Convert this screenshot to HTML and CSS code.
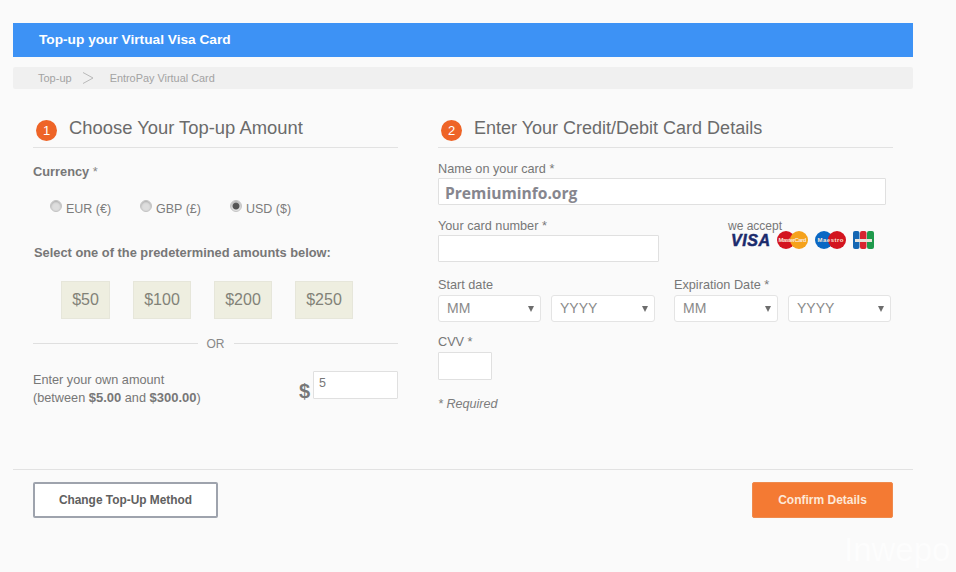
FILE: index.html
```html
<!DOCTYPE html>
<html lang="en">
<head>
<meta charset="utf-8">
<title>Top-up your Virtual Visa Card</title>
<link rel="stylesheet" href="styles.css">
</head>
<body>
<main class="page">
  <header class="banner">Top-up your Virtual Visa Card</header>
  <nav class="crumbs">
    <span>Top-up</span>
    <svg class="crumb-sep" width="12" height="14" viewBox="0 0 12 14"><path d="M1 1.500l10 5.500-10 5.500" fill="none" stroke="#b9b9b9" stroke-width="1"/></svg>
    <span class="crumb-current">EntroPay Virtual Card</span>
  </nav>
  <div class="columns">
    <section class="col-left">
      <h2 class="step-title step-title-1"><span class="step-num">1</span>Choose Your Top-up Amount</h2>
      <div class="currency-label">Currency <span class="star">*</span></div>
      <div class="radios">
        <label class="radio-item"><span class="radio"></span>EUR (€)</label>
        <label class="radio-item"><span class="radio"></span>GBP (£)</label>
        <label class="radio-item"><span class="radio radio-on"></span>USD ($)</label>
      </div>
      <div class="select-label">Select one of the predetermined amounts below:</div>
      <div class="amounts">
        <button class="amount amount-sm">$50</button>
        <button class="amount">$100</button>
        <button class="amount">$200</button>
        <button class="amount">$250</button>
      </div>
      <div class="or"><span class="or-text">OR</span></div>
      <div class="own">
        <p class="own-text">Enter your own amount<br>(between <b>$5.00</b> and <b>$300.00</b>)</p>
        <span class="dollar">$</span>
        <input class="input input-own" value="5">
      </div>
    </section>
    <section class="col-right">
      <h2 class="step-title step-title-2"><span class="step-num">2</span>Enter Your Credit/Debit Card Details</h2>
      <label class="field-label label-name">Name on your card *</label>
      <input class="input input-name" value="Premiuminfo.org">
      <div class="card-row">
        <div>
          <label class="field-label">Your card number *</label>
          <input class="input input-card">
        </div>
        <div class="accept">
          <div class="accept-text">we accept</div>
          <div class="logos">
            <svg width="41" height="16" viewBox="0 0 41 16"><text x="2" y="14" class="visa-text" textLength="39">VISA</text></svg>
            <svg width="31" height="18" viewBox="0 0 31 18"><circle cx="9" cy="9" r="9" fill="#d3141f"/><circle cx="22" cy="9" r="9" fill="#f5a21b"/><text x="15.500" y="11" class="mini-text" textLength="28">MasterCard</text></svg>
            <svg width="31" height="18" viewBox="0 0 31 18"><circle cx="9" cy="9" r="9" fill="#0a68c4"/><circle cx="22" cy="9" r="9" fill="#d3141f"/><text x="15.500" y="11" class="mini-text" textLength="26">Maestro</text></svg>
            <svg class="jcb" width="21" height="18" viewBox="0 0 21 18"><rect width="6.500" height="18" rx="2" fill="#1567b3"/><rect x="7" width="6.500" height="18" rx="2" fill="#d8242f"/><rect x="14" width="7" height="18" rx="2" fill="#1f9a4c"/><rect x="2" y="8" width="17" height="3" fill="#e9e4dc"/></svg>
          </div>
        </div>
      </div>
      <div class="dates">
        <div class="date-group">
          <label class="field-label">Start date</label>
          <div class="select-pair">
            <div class="select sel-1">MM</div>
            <div class="select sel-2">YYYY</div>
          </div>
        </div>
        <div class="date-group">
          <label class="field-label">Expiration Date *</label>
          <div class="select-pair">
            <div class="select sel-1b">MM</div>
            <div class="select sel-2b">YYYY</div>
          </div>
        </div>
      </div>
      <label class="field-label label-cvv">CVV *</label>
      <input class="input input-cvv">
      <p class="required">* Required</p>
    </section>
  </div>
  <footer class="actions">
    <button class="btn btn-ghost">Change Top-Up Method</button>
    <button class="btn btn-primary">Confirm Details</button>
  </footer>
</main>
<div class="watermark">Inwepo</div>
</body>
</html>
```
FILE: styles.css
```css
* { box-sizing: border-box; }
html, body { margin: 0; height: 100%; }
body {
  background: #fafafa;
  color: #6f6f6f;
  font-family: "Liberation Sans", Arial, sans-serif;
  font-size: 12px;
  position: relative;
  overflow: hidden;
}
.page { width: 913px; padding: 23px 0 0 13px; }
.banner {
  height: 34px;
  background: #3d92f5;
  color: #fff;
  font-weight: 700;
  font-size: 13.700px;
  line-height: 33px;
  padding-left: 26px;
}
.crumbs {
  margin-top: 10px;
  height: 22px;
  background: #f0f0f0;
  border-radius: 2px;
  display: flex;
  align-items: center;
  padding-left: 25px;
  font-size: 11px;
  color: #a3a3a3;
}
.crumb-sep { margin: 0 16px 0 10px; }
.crumb-current { font-size: 10.900px; }
.columns { display: flex; padding: 0 20px; gap: 40px; height: 380px; }
.col-left { width: 365px; }
.col-right { width: 455px; }
.step-title {
  margin: 0;
  height: 59px;
  padding-top: 28px;
  border-bottom: 1px solid #e2e2e2;
  font-weight: 400;
  font-size: 18px;
  line-height: 22px;
  color: #6b6b6b;
  display: flex;
  align-items: flex-start;
  white-space: nowrap;
}
.step-title-1 { font-size: 18.400px; }
.step-num {
  width: 21px;
  height: 21px;
  margin: 3px 12px 0 3px;
  border-radius: 50%;
  background: #ee6427;
  color: #fff;
  font-size: 13px;
  line-height: 21px;
  text-align: center;
  flex: none;
}
.currency-label {
  margin-top: 16px;
  font-weight: 700;
  font-size: 12.800px;
  line-height: 15px;
  color: #777;
}
.star { color: #888; font-weight: 400; }
.radios { display: flex; margin: 22px 0 0 17px; }
.radio-item {
  display: flex;
  align-items: flex-start;
  font-size: 12.500px;
  line-height: 16px;
  color: #7c7c7c;
  white-space: nowrap;
  width: 90px;
}
.radio {
  width: 12px;
  height: 12px;
  margin: -1px 4px 0 0;
  border-radius: 50%;
  background: #dedede;
  border: 1px solid #c3c3c3;
  box-shadow: inset 0 1px 2px #aaa;
  flex: none;
}
.radio-on {
  background: radial-gradient(circle, #555 0 3px, #e8e8e8 4px);
}
.select-label {
  margin: 28px 0 0 1px;
  font-weight: 700;
  font-size: 12.850px;
  line-height: 16px;
  color: #777;
}
.amounts { display: flex; margin: 20px 0 0 28px; gap: 23px; }
.amount {
  width: 58px;
  height: 38px;
  padding: 0;
  background: #eeeee0;
  border: 1px solid #e6e6da;
  font-family: inherit;
  font-size: 16px;
  color: #828278;
}
.amount-sm { width: 49px; }
.or {
  margin-top: 15px;
  display: flex;
  align-items: center;
  gap: 9px;
  font-size: 12px;
  color: #888;
}
.or-text { line-height: 16px; padding-top: 2px; }
.or::before, .or::after {
  content: "";
  height: 1px;
  background: #dfdfdf;
  flex: 1;
}
.own { display: flex; align-items: flex-start; margin-top: 19px; }
.own-text {
  margin: 0;
  flex: 1;
  font-size: 12.700px;
  line-height: 18px;
  color: #777;
}
.own-text b { font-size: 13px; }
.dollar {
  font-size: 20px;
  font-weight: 700;
  line-height: 24px;
  margin: 8px 3px 0 0;
  color: #777;
}
.input {
  display: block;
  background: #fff;
  border: 1px solid #e0e0e0;
  border-radius: 1px;
  outline: none;
  padding: 0 8px;
  font-family: inherit;
  color: #777;
}
.input-own { width: 85px; height: 28px; font-size: 12.500px; padding: 0 0 5px 5px; }
.field-label {
  display: block;
  font-size: 12.700px;
  line-height: 15px;
  padding-top: 1px;
  margin-bottom: -1px;
  color: #777;
  white-space: nowrap;
}
.label-name { margin-top: 13px; }
.input-name {
  margin-top: 2px;
  width: 448px;
  height: 27px;
  font-family: "Open Sans", sans-serif;
  font-weight: 700;
  font-size: 15.600px;
  color: #86868e;
  padding: 2px 0 0 6px;
}
.card-row { display: flex; margin-top: 13px; }
.input-card { margin-top: 2px; width: 221px; height: 27px; }
.accept { margin: 2px 0 0 69px; }
.accept-text { font-size: 12px; line-height: 12px; color: #777; }
.logos { display: flex; align-items: center; margin: -1px 0 0 1px; }
.logos svg { display: block; }
.logos svg:nth-child(2) { margin-left: 7px; }
.logos svg:nth-child(3) { margin-left: 7px; }
.logos .jcb { margin-left: 7px; }
.visa-text {
  font-family: "Liberation Sans", sans-serif;
  font-weight: 700;
  font-style: italic;
  font-size: 16px;
  fill: #1a2a6c;
  stroke: #1a2a6c;
  stroke-width: 0.500px;
}
.mini-text {
  font-family: "Liberation Sans", sans-serif;
  font-weight: 700;
  font-size: 6px;
  fill: #fbe6d8;
  text-anchor: middle;
}
.dates { display: flex; margin-top: 15px; gap: 19px; }
.date-group .field-label { margin-bottom: 2px; }
.select-pair { display: flex; gap: 10px; }
.select {
  position: relative;
  height: 27px;
  background: #fff;
  border: 1px solid #e4e4e4;
  border-radius: 3px;
  font-size: 14px;
  line-height: 25px;
  color: #8a8a8a;
  padding-left: 8px;
}
.select::after {
  content: "";
  position: absolute;
  right: 6px;
  top: 10px;
  border: 3.500px solid transparent;
  border-top: 6px solid #6d6d6d;
  border-bottom: 0;
}
.sel-1 { width: 103px; }
.sel-2 { width: 104px; }
.sel-1b { width: 104px; }
.sel-2b { width: 103px; }
.label-cvv { margin-top: 12px; }
.input-cvv { margin-top: 3px; width: 54px; height: 28px; }
.required {
  margin: 16px 0 0;
  font-style: italic;
  font-size: 12.600px;
  line-height: 16px;
  color: #7d7d7d;
}
.actions {
  border-top: 1px solid #e2e2e2;
  display: flex;
  justify-content: space-between;
  padding: 12px 20px 0;
}
.btn {
  height: 36px;
  padding: 0;
  border-radius: 2px;
  font-family: inherit;
  font-size: 11.900px;
  font-weight: 700;
}
.btn-ghost {
  width: 185px;
  background: #fff;
  border: 2px solid #9ea3ad;
  color: #606060;
}
.btn-primary {
  width: 141px;
  background: #f47a33;
  border: 1px solid #ef8a4d;
  color: #fde8d8;
  font-size: 12px;
}
.watermark {
  position: absolute;
  right: 0;
  bottom: 2px;
  width: 112px;
  font-size: 33px;
  line-height: 40px;
  color: #fff;
  opacity: 0.6;
  white-space: nowrap;
}
```
